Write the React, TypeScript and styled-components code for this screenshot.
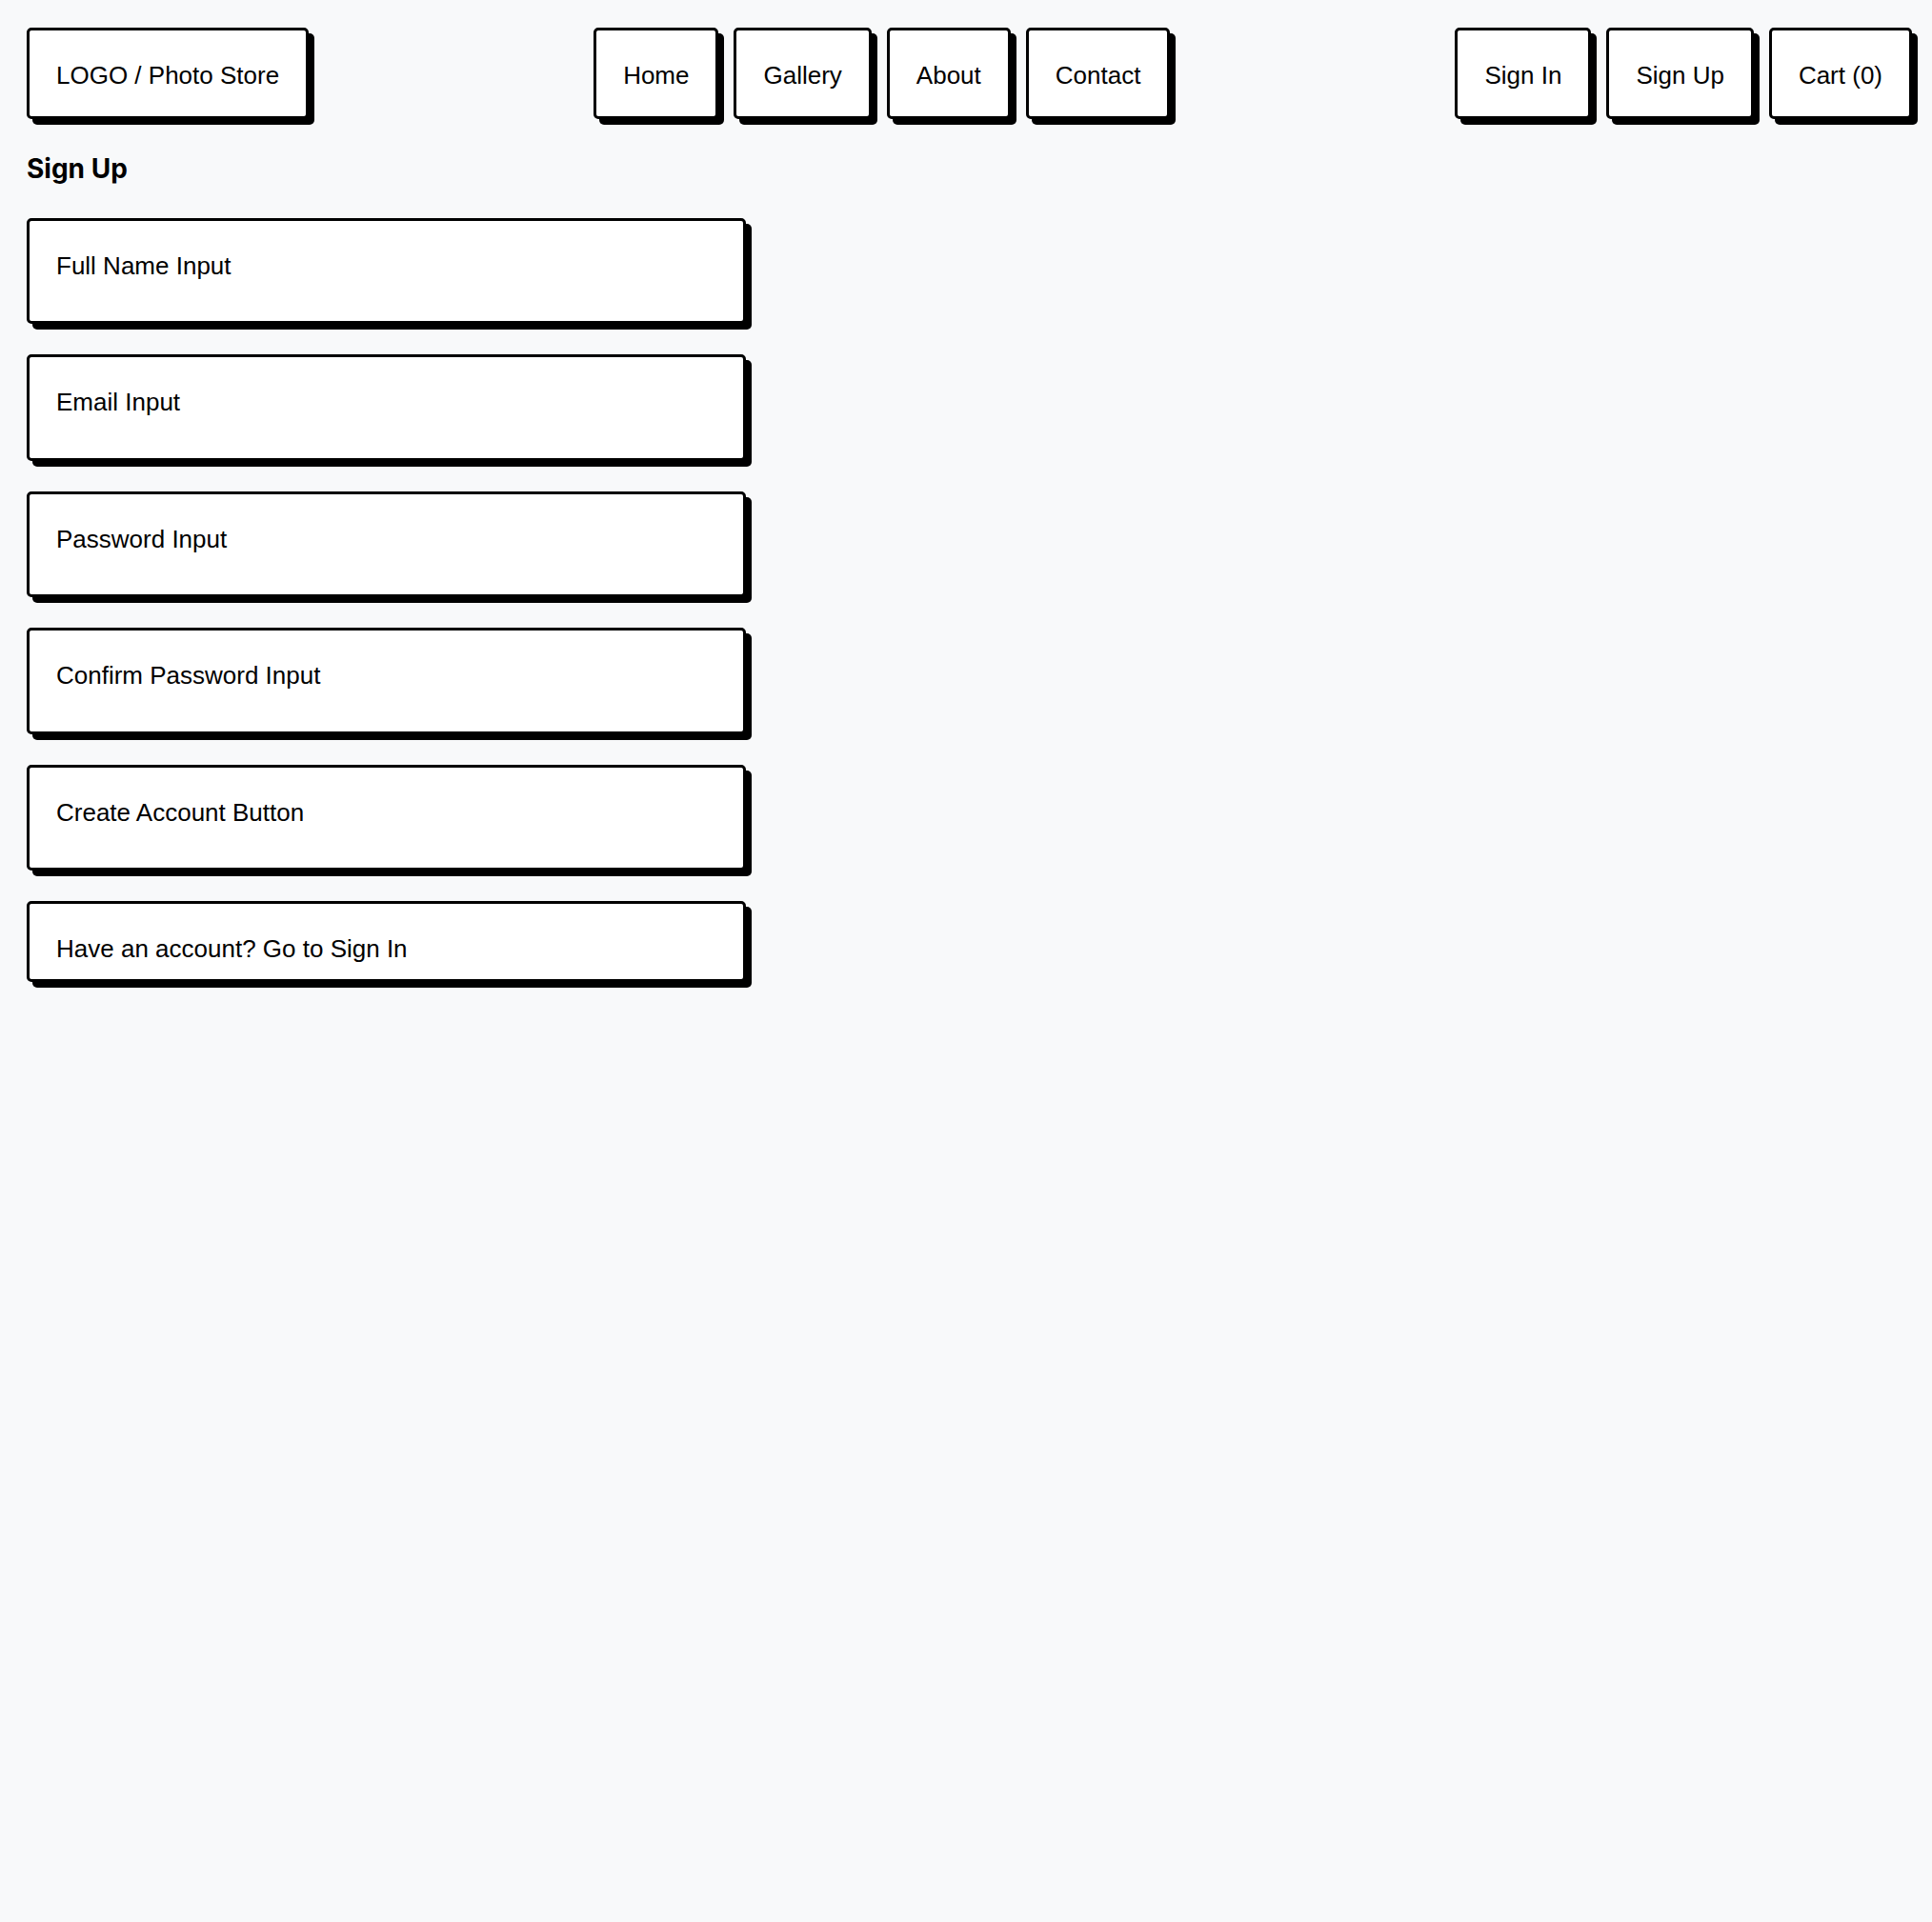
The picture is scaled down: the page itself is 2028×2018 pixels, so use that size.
import styled, { createGlobalStyle } from 'styled-components';

const GlobalStyle = createGlobalStyle`
  html, body {
    margin: 0;
    background: #f8f9fa;
  }
  body {
    font-family: 'Comic Sans MS', 'Liberation Sans', sans-serif;
    color: #000;
  }
`;

const Page = styled.div`
  box-sizing: border-box;
  min-height: 100vh;
  padding: 29px 21px 28px 28px;
`;

const Header = styled.header`
  display: flex;
  align-items: flex-start;
`;

/* hand-drawn wireframe box: thick outline + hard offset shadow */
const Sketch = styled.div`
  box-sizing: border-box;
  background: #fff;
  border: 3px solid #000;
  border-radius: 5px;
  box-shadow: 6px 6px 0 #000;
  font-family: 'Comic Sans MS', 'Liberation Sans', sans-serif;
  font-size: 26px;
  line-height: normal;
  color: #000;
  white-space: nowrap;
`;

const NavBox = styled(Sketch)`
  height: 96px;
  padding: 32px 28px 0;
`;

const Links = styled.nav`
  flex: 1;
  display: flex;
  justify-content: center;
  gap: 16px;
`;

const Actions = styled.div`
  display: flex;
  gap: 16px;
`;

const Title = styled.h2`
  margin: 36px 0 34px;
  font-family: Inter, 'Liberation Sans', sans-serif;
  font-size: 28px;
  font-weight: 700;
  line-height: 1.2;
`;

const Form = styled.div`
  display: flex;
  flex-direction: column;
  gap: 32px;
  width: 755px;
`;

const Field = styled(Sketch)<{ $short?: boolean }>`
  height: ${p => (p.$short ? 85 : 111.5)}px;
  padding: 32px 28px 0;
`;

const navLinks = ['Home', 'Gallery', 'About', 'Contact'];
const accountLinks = ['Sign In', 'Sign Up', 'Cart (0)'];
const fields = ['Full Name Input', 'Email Input', 'Password Input', 'Confirm Password Input', 'Create Account Button'];

export default function App() {
  return (
    <>
      <GlobalStyle />
      <Page>
        <Header>
          <NavBox>LOGO / Photo Store</NavBox>
          <Links>
            {navLinks.map(l => (
              <NavBox key={l}>{l}</NavBox>
            ))}
          </Links>
          <Actions>
            {accountLinks.map(l => (
              <NavBox key={l}>{l}</NavBox>
            ))}
          </Actions>
        </Header>

        <Title>Sign Up</Title>

        <Form>
          {fields.map(f => (
            <Field key={f}>{f}</Field>
          ))}
          <Field $short>Have an account? Go to Sign In</Field>
        </Form>
      </Page>
    </>
  );
}
